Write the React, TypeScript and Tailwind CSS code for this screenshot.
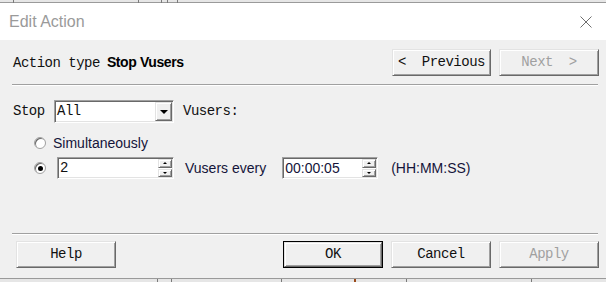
import React from "react";

const mono = "font-['Liberation_Mono',monospace] text-[14px] tracking-[-0.5px] text-[#111]";
const sans = "font-['Liberation_Sans',Arial,sans-serif] text-[14px]";
const raised =
  "border border-t-[#e3e3e3] border-l-[#e3e3e3] border-r-[#696969] border-b-[#696969] shadow-[inset_1px_1px_0_#ffffff,inset_-1px_-1px_0_#a0a0a0] bg-[#f0f0f0]";
const sunken =
  "border border-t-[#a0a0a0] border-l-[#a0a0a0] border-r-white border-b-white shadow-[inset_1px_1px_0_#696969,inset_-1px_-1px_0_#e3e3e3] bg-white";

function Btn({
  label,
  disabled,
  isDefault,
  w = "w-[100px]",
}: {
  label: string;
  disabled?: boolean;
  isDefault?: boolean;
  w?: string;
}) {
  const inner = (
    <div
      className={`${raised} flex-1 flex items-center justify-center whitespace-pre ${mono} ${
        disabled ? "!text-[#a0a0a0]" : ""
      }`}
    >
      {label}
    </div>
  );
  if (isDefault) {
    return <div className={`${w} h-[27px] flex border border-black`}>{inner}</div>;
  }
  return <div className={`${w} h-[27px] flex`}>{inner}</div>;
}

function Spinner() {
  return (
    <div className="w-[15px] flex flex-col gap-[1px] py-[1px] pr-[1px]">
      <div className={`${raised} flex-1 flex items-center justify-center`}>
        <div className="w-0 h-0 border-l-[2px] border-r-[2px] border-b-[2px] border-l-transparent border-r-transparent border-b-black" />
      </div>
      <div className={`${raised} flex-1 flex items-center justify-center`}>
        <div className="w-0 h-0 border-l-[2px] border-r-[2px] border-t-[2px] border-l-transparent border-r-transparent border-t-black" />
      </div>
    </div>
  );
}

function Radio({ checked }: { checked?: boolean }) {
  return (
    <div className="w-[12px] h-[12px] rounded-full border border-[#a0a0a0] bg-white flex items-center justify-center shadow-[inset_1px_1px_0_#696969]">
      {checked && <div className="w-[5px] h-[5px] rounded-full bg-black" />}
    </div>
  );
}

function Separator() {
  return <div className="h-[2px] border-t border-t-[#a0a0a0] border-b border-b-white" />;
}

export default function App() {
  const topLines = [13, 138, 161, 167, 177];
  const bottomLines = [157, 171, 281, 354, 406, 531];
  return (
    <div className="w-[606px] h-[282px] flex flex-col bg-[#f0f0f0] overflow-hidden">
      {/* window behind, top */}
      <div className="relative h-[3px] bg-[#e6e6e6] border-b border-b-[#9a9a9a]">
        {topLines.map((x) => (
          <div key={x} className="absolute top-0 h-[3px] w-[1px] bg-[#7a7a7a]" style={{ left: x }} />
        ))}
      </div>

      {/* title bar */}
      <div className="h-[37px] bg-white flex items-center justify-between pl-[9px] pr-[14px]">
        <span className="font-['Liberation_Sans',Arial,sans-serif] text-[16px] text-[#9a9a9a]">
          Edit Action
        </span>
        <svg width="12" height="12" viewBox="0 0 12 12" className="mt-[1px]">
          <path d="M0.5 0.5 L11.5 11.5 M11.5 0.5 L0.5 11.5" stroke="#6e6e6e" strokeWidth="1" />
        </svg>
      </div>

      {/* body */}
      <div className="flex-1 flex flex-col pl-[12px] pr-[7px]">
        <div className="mt-[9px] flex items-center justify-between">
          <div className="flex items-baseline pl-[1px]">
            <span className={mono}>Action type</span>
            <span className={`${sans} font-bold tracking-[-0.4px] text-black ml-[7px]`}>Stop Vusers</span>
          </div>
          <div className="flex gap-[8px]">
            <Btn label="<  Previous" w="w-[99px]" />
            <Btn label="Next  >" disabled />
          </div>
        </div>
        <div className="mt-[8px] mr-[1px]">
          <Separator />
        </div>

        {/* stop row */}
        <div className="mt-[14px] flex items-center">
          <span className={`${mono} pl-[1px] w-[42px]`}>Stop</span>
          <div className={`${sunken} w-[120px] h-[23px] flex items-center pl-[2px]`}>
            <span className={`${mono} flex-1`}>All</span>
            <div className={`${raised} w-[17px] h-[19px] mr-[1px] flex items-center justify-center`}>
              <div className="w-0 h-0 border-l-[4px] border-r-[4px] border-t-[4px] border-l-transparent border-r-transparent border-t-black" />
            </div>
          </div>
          <span className={`${mono} ml-[9px]`}>Vusers:</span>
        </div>

        {/* simultaneously */}
        <div className="mt-[12px] flex items-center pl-[22px] h-[16px]">
          <Radio />
          <span className={`${sans} text-[#14143a] ml-[7px]`}>Simultaneously</span>
        </div>

        {/* gradual */}
        <div className="mt-[6px] flex items-center pl-[22px]">
          <Radio checked />
          <div className={`${sunken} ml-[11px] w-[117px] h-[22px] flex`}>
            <span className={`${mono} flex-1 pl-[2px] leading-[20px]`}>2</span>
            <Spinner />
          </div>
          <span className={`${sans} text-[#14143a] ml-[11px]`}>Vusers every</span>
          <div className={`${sunken} ml-[16px] w-[96px] h-[22px] flex`}>
            <span className={`${sans} text-[#14143a] flex-1 pl-[2px] leading-[20px]`}>00:00:05</span>
            <Spinner />
          </div>
          <span className={`${sans} text-[#14143a] ml-[13px]`}>(HH:MM:SS)</span>
        </div>

        <div className="flex-1" />
        <div className="mr-[1px]">
          <Separator />
        </div>

        {/* bottom buttons */}
        <div className="mt-[6px] mb-[10px] flex items-center">
          <div className="ml-[4px]">
            <Btn label="Help" />
          </div>
          <div className="flex-1" />
          <div className="flex gap-[8px]">
            <Btn label="OK" isDefault />
            <Btn label="Cancel" />
            <Btn label="Apply" disabled />
          </div>
        </div>
      </div>

      {/* window behind, bottom */}
      <div className="relative h-[4px] bg-[#e6e6e6] border-t border-t-[#9a9a9a]">
        {bottomLines.map((x) => (
          <div
            key={x}
            className={`absolute top-0 h-[4px] w-[1px] ${x === 354 ? "bg-[#9a4a1a] w-[2px]" : "bg-[#7a7a7a]"}`}
            style={{ left: x }}
          />
        ))}
      </div>
    </div>
  );
}
